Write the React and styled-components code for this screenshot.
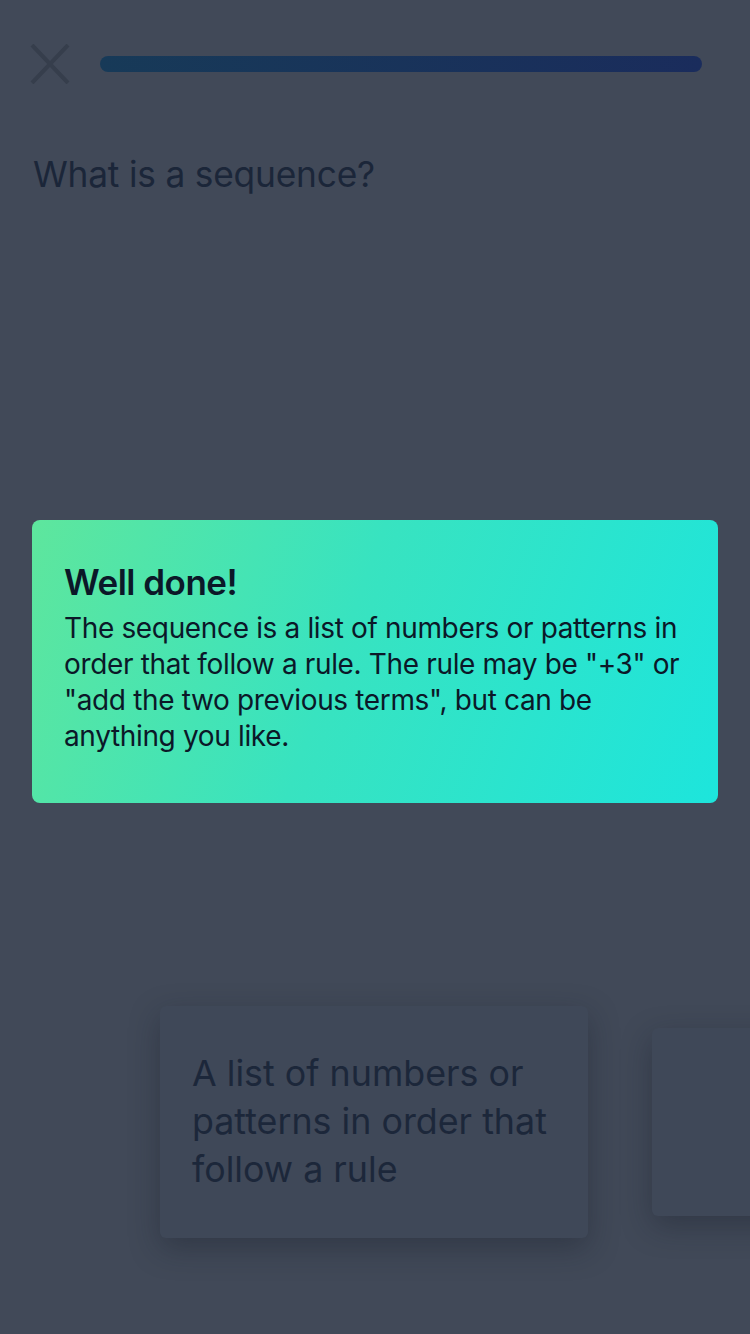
import React from "react";
import styled, { createGlobalStyle } from "styled-components";

const Global = createGlobalStyle`
  html, body { margin: 0; padding: 0; }
  body { background: #414958; font-family: Inter, "Open Sans", sans-serif; }
`;

const Screen = styled.div`
  position: relative;
  width: 750px;
  height: 1334px;
  overflow: hidden;
  background: #414958;
`;

const TopBar = styled.div`
  display: flex;
  align-items: center;
  gap: 30px;
  padding: 44px 48px 0 30px;
`;

const CloseButton = styled.button`
  width: 40px;
  height: 40px;
  padding: 0;
  border: 0;
  background: transparent;
  display: flex;
  align-items: center;
  justify-content: center;
  svg { display: block; }
`;

const Progress = styled.div`
  flex: 1;
  height: 16px;
  border-radius: 8px;
  background: linear-gradient(90deg, #173a58 0%, #1a2c5c 100%);
`;

const Question = styled.h1`
  margin: 69px 0 0 33px;
  font-size: 35.3px;
  font-weight: 400;
  color: #1b2639;
  letter-spacing: -0.2px;
`;

const Answers = styled.div`
  position: absolute;
  top: 1006px;
  left: 160px;
  display: flex;
  align-items: center;
  gap: 64px;
`;

const AnswerCard = styled.div`
  flex: none;
  box-sizing: border-box;
  width: ${(p) => p.$w}px;
  height: ${(p) => p.$h}px;
  margin-top: ${(p) => p.$offset || 0}px;
  border-radius: 6px;
  background: #3f4858;
  box-shadow: 0 10px 30px rgba(20, 26, 36, 0.35);
  padding: 43px 32px;
  font-size: 35.8px;
  line-height: 48px;
  color: #1c273a;
  align-self: flex-start;
`;

const Modal = styled.div`
  position: absolute;
  left: 32px;
  top: 520px;
  width: 686px;
  height: 283px;
  box-sizing: border-box;
  border-radius: 8px;
  padding: 42px 12px 42px 32px;
  background: linear-gradient(110deg, #5ee69d 0%, #38e3c0 45%, #1de5dc 100%);
`;

const ModalTitle = styled.h2`
  margin: 0 0 8px;
  font-size: 35px;
  line-height: 40px;
  font-weight: 600;
  color: #0b1828;
  letter-spacing: -0.5px;
`;

const ModalBody = styled.p`
  margin: 0;
  font-size: 28px;
  line-height: 36px;
  color: #0b1828;
  letter-spacing: -0.35px;
`;

export default function App() {
  return (
    <>
      <Global />
      <Screen>
        <TopBar>
          <CloseButton aria-label="Close">
            <svg width="40" height="40" viewBox="0 0 40 40">
              <path d="M2 1 L38 39 M38 1 L2 39" stroke="#363e4c" strokeWidth="4" />
            </svg>
          </CloseButton>
          <Progress />
        </TopBar>
        <Question>What is a sequence?</Question>
        <Answers>
          <AnswerCard $w={428} $h={232}>
            A list of numbers or patterns in order that follow a rule
          </AnswerCard>
          <AnswerCard $w={348} $h={188} $offset={22} />
        </Answers>
        <Modal>
          <ModalTitle>Well done!</ModalTitle>
          <ModalBody>
            The sequence is a list of numbers or patterns in order that follow a rule. The rule may be "+3" or "add the two previous terms", but can be anything you like.
          </ModalBody>
        </Modal>
      </Screen>
    </>
  );
}
